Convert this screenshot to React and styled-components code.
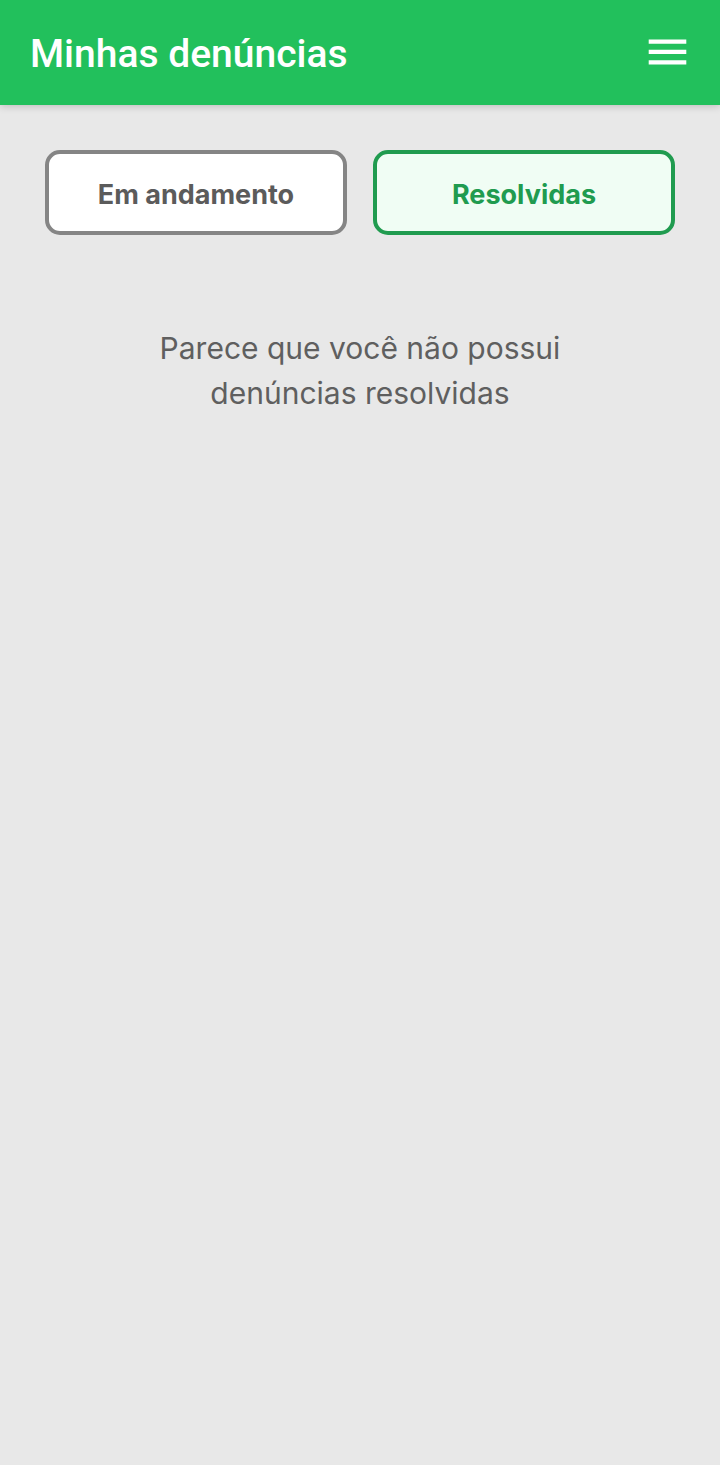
import React, { useState } from 'react';
import styled, { createGlobalStyle } from 'styled-components';

const GlobalStyle = createGlobalStyle`
  *, *::before, *::after { box-sizing: border-box; }
  body {
    margin: 0;
    background: #e8e8e8;
    font-family: Inter, sans-serif;
  }
`;

const Page = styled.div`
  min-height: 100vh;
  background: #e8e8e8;
`;

const Header = styled.header`
  display: flex;
  align-items: center;
  justify-content: space-between;
  height: 105px;
  padding: 0 30px;
  background: #22c05c;
  box-shadow: 0 1px 8px rgba(0, 0, 0, 0.2);
`;

const Title = styled.h1`
  margin: 0;
  padding-top: 2px;
  color: #ffffff;
  font: 500 39px/48px Roboto, sans-serif;
`;

const MenuButton = styled.button`
  display: flex;
  padding: 0;
  border: 0;
  background: transparent;
  color: #ffffff;
  cursor: pointer;
`;

const Tabs = styled.nav`
  display: grid;
  grid-template-columns: 1fr 1fr;
  gap: 26px;
  padding: 45px 45px 0;
`;

const Tab = styled.button`
  height: 85px;
  padding: 4px 0 0;
  border: 4px solid ${({ $active }) => ($active ? '#209b4f' : '#858585')};
  border-radius: 15px;
  background: ${({ $active }) => ($active ? '#f0fdf4' : '#ffffff')};
  color: ${({ $active }) => ($active ? '#209b4f' : '#5b5b5b')};
  font: 700 27px/40px Inter, sans-serif;
  cursor: pointer;
`;

const EmptyMessage = styled.p`
  max-width: 450px;
  margin: 0 auto;
  padding-top: 91px;
  color: #5f5f5f;
  font-size: 30px;
  line-height: 45px;
  text-align: center;
`;

const tabs = [
  { id: 'pending', label: 'Em andamento', empty: 'Parece que você não possui denúncias em andamento' },
  { id: 'resolved', label: 'Resolvidas', empty: 'Parece que você não possui denúncias resolvidas' },
];

export default function App() {
  const [selected, setSelected] = useState('resolved');
  const current = tabs.find((tab) => tab.id === selected);

  return (
    <Page>
      <GlobalStyle />
      <Header>
        <Title>Minhas denúncias</Title>
        <MenuButton type="button" aria-label="Abrir menu">
          <svg width="45" height="45" viewBox="0 0 45 45" fill="currentColor" aria-hidden="true">
            <path d="M3.7 9.4h37.6v4.3H3.7zM3.7 19.8h37.6v4.3H3.7zM3.7 30.2h37.6v4.3H3.7z" />
          </svg>
        </MenuButton>
      </Header>
      <main>
        <Tabs aria-label="Situação das denúncias">
          {tabs.map((tab) => (
            <Tab
              key={tab.id}
              type="button"
              $active={tab.id === selected}
              aria-pressed={tab.id === selected}
              onClick={() => setSelected(tab.id)}
            >
              {tab.label}
            </Tab>
          ))}
        </Tabs>
        <EmptyMessage>{current.empty}</EmptyMessage>
      </main>
    </Page>
  );
}
